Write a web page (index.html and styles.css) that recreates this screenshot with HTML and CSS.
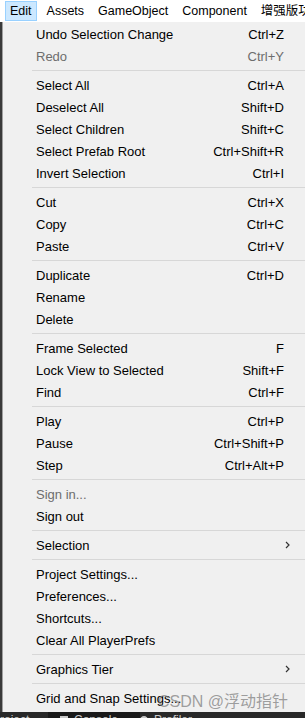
FILE: index.html
```html
<!DOCTYPE html>
<html lang="en">
<head>
    <meta charset="UTF-8">
    <meta name="viewport" content="width=device-width, initial-scale=1.0">
    <title>Edit menu</title>
    <link rel="stylesheet" href="styles.css">
</head>
<body>
    <div class="menubar">
        <span class="menubar-item active">Edit</span>
        <span class="menubar-item">Assets</span>
        <span class="menubar-item">GameObject</span>
        <span class="menubar-item">Component</span>
        <span class="menubar-item">增强版功能</span>
    </div>

    <div class="editor">
        <div class="dropdown">
            <div class="item"><span class="label">Undo Selection Change</span><span class="key">Ctrl+Z</span></div>
            <div class="item disabled"><span class="label">Redo</span><span class="key">Ctrl+Y</span></div>
            <div class="sep"></div>
            <div class="item"><span class="label">Select All</span><span class="key">Ctrl+A</span></div>
            <div class="item"><span class="label">Deselect All</span><span class="key">Shift+D</span></div>
            <div class="item"><span class="label">Select Children</span><span class="key">Shift+C</span></div>
            <div class="item"><span class="label">Select Prefab Root</span><span class="key">Ctrl+Shift+R</span></div>
            <div class="item"><span class="label">Invert Selection</span><span class="key">Ctrl+I</span></div>
            <div class="sep"></div>
            <div class="item"><span class="label">Cut</span><span class="key">Ctrl+X</span></div>
            <div class="item"><span class="label">Copy</span><span class="key">Ctrl+C</span></div>
            <div class="item"><span class="label">Paste</span><span class="key">Ctrl+V</span></div>
            <div class="sep"></div>
            <div class="item"><span class="label">Duplicate</span><span class="key">Ctrl+D</span></div>
            <div class="item"><span class="label">Rename</span></div>
            <div class="item"><span class="label">Delete</span></div>
            <div class="sep"></div>
            <div class="item"><span class="label">Frame Selected</span><span class="key">F</span></div>
            <div class="item"><span class="label">Lock View to Selected</span><span class="key">Shift+F</span></div>
            <div class="item"><span class="label">Find</span><span class="key">Ctrl+F</span></div>
            <div class="sep"></div>
            <div class="item"><span class="label">Play</span><span class="key">Ctrl+P</span></div>
            <div class="item"><span class="label">Pause</span><span class="key">Ctrl+Shift+P</span></div>
            <div class="item"><span class="label">Step</span><span class="key">Ctrl+Alt+P</span></div>
            <div class="sep"></div>
            <div class="item disabled"><span class="label">Sign in...</span></div>
            <div class="item"><span class="label">Sign out</span></div>
            <div class="sep"></div>
            <div class="item"><span class="label">Selection</span><svg class="arrow" width="5" height="8" viewBox="0 0 5 8"><path d="M1 1l3 3-3 3" fill="none" stroke="#333" stroke-width="1.2"/></svg></div>
            <div class="sep"></div>
            <div class="item"><span class="label">Project Settings...</span></div>
            <div class="item"><span class="label">Preferences...</span></div>
            <div class="item"><span class="label">Shortcuts...</span></div>
            <div class="item"><span class="label">Clear All PlayerPrefs</span></div>
            <div class="sep"></div>
            <div class="item"><span class="label">Graphics Tier</span><svg class="arrow" width="5" height="8" viewBox="0 0 5 8"><path d="M1 1l3 3-3 3" fill="none" stroke="#333" stroke-width="1.2"/></svg></div>
            <div class="sep"></div>
            <div class="item"><span class="label">Grid and Snap Settings...</span></div>
            <span class="watermark">CSDN @浮动指针</span>
        </div>
    </div>

    <div class="tabbar">
        <span class="tab">Project</span>
        <span class="tab tab-dark"><span class="tab-icon"></span>Console</span>
        <span class="tab"><span class="tab-icon round"></span>Profiler</span>
    </div>
</body>
</html>
```

FILE: styles.css
```css
* {
    margin: 0;
    padding: 0;
    box-sizing: border-box;
}

body {
    font-family: "Liberation Sans", "Noto Sans CJK SC", Arial, sans-serif;
    font-size: 12px;
    color: #000;
    background-color: #2a2a2a;
    width: 305px;
    height: 718px;
    overflow: hidden;
}

.menubar {
    height: 22px;
    background-color: #fff;
    display: flex;
    align-items: center;
    padding-left: 5px;
    white-space: nowrap;
    overflow: hidden;
}

.menubar-item {
    padding: 0 3px;
    margin-right: 6px;
    height: 20px;
    line-height: 18px;
    border: 1px solid transparent;
    font-size: 12.5px;
}

.menubar-item.active {
    background-color: #cce8ff;
    border-color: #99d1ff;
    padding: 0 4px;
}

.editor {
    display: flex;
    background-color: #3a3a3a;
    height: 690px;
}

.dropdown {
    position: relative;
    margin-left: 2px;
    width: 305px;
    background-color: #f0f0f0;
    border-left: 1px solid #a0a0a0;
    padding-top: 1px;
}

.item {
    display: flex;
    align-items: center;
    height: 22px;
    padding-left: 33px;
    padding-right: 21px;
    font-size: 13px;
}

.item .label {
    flex: 1;
}

.item .key {
    text-align: right;
}

.item.disabled {
    color: #6d6d6d;
}

.arrow {
    margin-right: -6px;
}

.sep {
    height: 7px;
    margin-left: 29px;
    display: flex;
    align-items: center;
}

.sep::before {
    content: "";
    flex: 1;
    height: 1px;
    background-color: #d7d7d7;
}

.watermark {
    position: absolute;
    left: 155px;
    top: 666px;
    font-family: "Liberation Sans", "Noto Sans CJK SC", sans-serif;
    font-size: 16px;
    color: rgba(120, 120, 120, 0.7);
    white-space: nowrap;
}

.tabbar {
    height: 6px;
    display: flex;
    background-color: #282828;
    color: #c8c8c8;
    font-size: 12px;
    line-height: 14px;
    white-space: nowrap;
    overflow: hidden;
}

.tab {
    margin-top: 1px;
    padding-right: 10px;
    display: flex;
    gap: 6px;
}

.tab:first-child {
    margin-left: -8px;
    width: 56px;
}

.tab-dark {
    margin-top: 0;
    padding-top: 1px;
    background-color: #191919;
    padding-left: 12px;
    width: 92px;
}

.tab-icon {
    width: 8px;
    height: 9px;
    margin-top: 3px;
    border-top: 2px solid #c8c8c8;
}

.tab-icon.round {
    border-radius: 50%;
    background-color: #c8c8c8;
}
```
